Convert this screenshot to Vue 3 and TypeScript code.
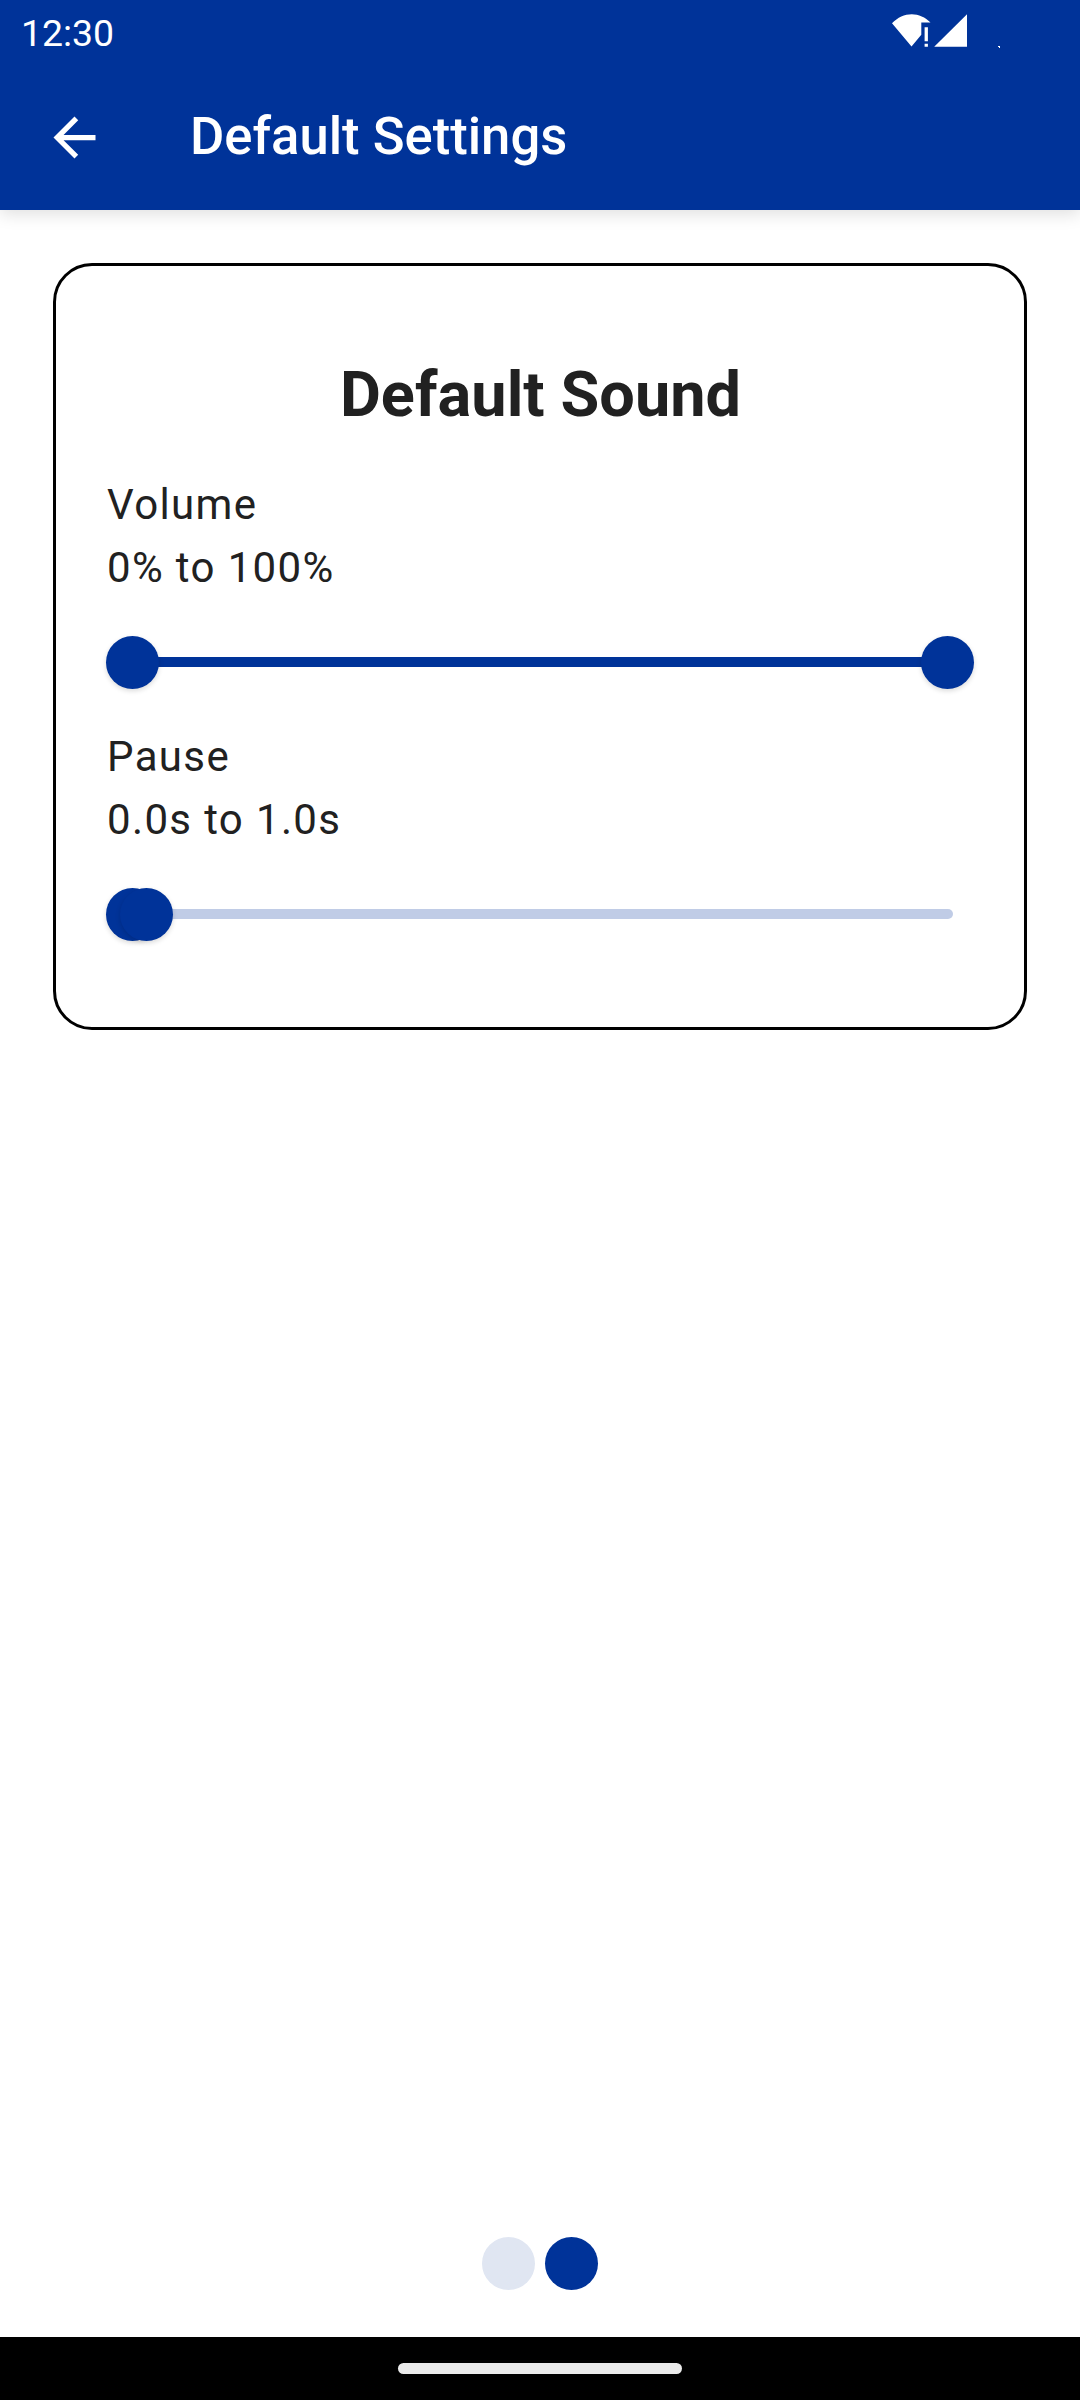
<script setup lang="ts">
interface RangeSetting {
  label: string
  summary: string
  from: number
  to: number
}

const settings: RangeSetting[] = [
  { label: 'Volume', summary: '0% to 100%', from: 0, to: 100 },
  { label: 'Pause', summary: '0.0s to 1.0s', from: 0, to: 1.7 },
]
const pages = [false, true]
</script>

<template>
  <div class="screen">
    <header class="top">
      <div class="status">
        <span class="time">12:30</span>
        <svg class="status-icons" viewBox="0 0 120 40" width="120" height="40">
          <path d="M2 16.3C13 4.2 30 4.2 40.5 15.6V15.4H31.3V27.8L21.5 39.5Z" fill="#fff" />
          <path d="M34.6 20.2h3.3v14h-3.3zM34.6 36.8h3.3v3h-3.3zM44.2 39.8 77 7.2v32.6z" fill="#fff" />
          <path d="M108 39h2v2h-1v-1h-1z" fill="#fff" />
        </svg>
      </div>
      <div class="toolbar">
        <svg class="back" viewBox="0 0 24 24" width="63" height="63">
          <path d="M20 11H7.83l5.59-5.59L12 4l-8 8 8 8 1.41-1.41L7.83 13H20v-2z" fill="#fff" />
        </svg>
        <h1>Default Settings</h1>
      </div>
    </header>

    <main class="body">
      <section class="card">
        <h2>Default Sound</h2>
        <div v-for="s in settings" :key="s.label" class="setting">
          <p>{{ s.label }}</p>
          <p>{{ s.summary }}</p>
          <div class="slider">
            <div class="track"></div>
            <div class="range" :style="{ left: s.from + '%', width: s.to - s.from + '%' }"></div>
            <div class="thumb" :style="{ left: s.from + '%' }"></div>
            <div class="thumb" :style="{ left: s.to + '%' }"></div>
          </div>
        </div>
      </section>
      <div class="dots">
        <span v-for="(active, i) in pages" :key="i" class="dot" :class="{ active }"></span>
      </div>
    </main>

    <footer class="nav"><span class="pill"></span></footer>
  </div>
</template>

<style>
body {
  margin: 0;
}
</style>

<style scoped>
.screen {
  width: 1080px;
  height: 2400px;
  display: flex;
  flex-direction: column;
  background: #fff;
  color: #212121;
  font-family: Roboto, sans-serif;
  overflow: hidden;
}
h1,
h2,
p {
  margin: 0;
}
.top {
  height: 210px;
  flex: none;
  background: #003399;
  color: #fff;
  box-shadow: 0 4px 16px rgba(0, 0, 0, 0.13);
}
.status {
  height: 63px;
  display: flex;
  justify-content: space-between;
  padding: 0 70px 0 21px;
}
.time {
  font-size: 37.4px;
  line-height: 67px;
}
.status-icons {
  display: block;
  overflow: visible;
  margin-top: 7px;
}
.toolbar {
  height: 147px;
  display: flex;
  align-items: center;
}
.back {
  margin: 2px 0 0 43px;
}
h1 {
  margin: 0 0 2px 84px;
  font-size: 52.6px;
  line-height: 62px;
  font-weight: 500;
  white-space: nowrap;
}
.body {
  flex: 1;
  display: flex;
  flex-direction: column;
  justify-content: space-between;
  padding: 53px 53px 47px;
}
.card {
  box-sizing: border-box;
  height: 767px;
  border: 3px solid #000;
  border-radius: 39px;
  padding: 89px 50px 0 51px;
}
h2 {
  font-size: 63px;
  line-height: 80px;
  font-weight: 700;
  letter-spacing: 0.05px;
  text-align: center;
  margin-bottom: 38px;
}
.setting {
  height: 252px;
}
p {
  font-size: 42px;
  line-height: 63px;
  letter-spacing: 1.36px;
}
.slider {
  position: relative;
  height: 126px;
  margin: 0 26.6px 0 25.4px;
}
.track,
.range {
  position: absolute;
  top: 57.7px;
  height: 10.5px;
}
.track {
  left: -5px;
  right: -5.4px;
  border-radius: 6px;
  background: #c0cce6;
}
.range {
  background: #003399;
}
.thumb {
  position: absolute;
  top: 37px;
  width: 53px;
  height: 53px;
  margin-left: -26.4px;
  border-radius: 50%;
  background: #003399;
  box-shadow: 0 2px 5px rgba(0, 0, 0, 0.15);
}
.dots {
  display: flex;
  justify-content: center;
  gap: 10px;
}
.dot {
  width: 53px;
  height: 53px;
  border-radius: 50%;
  background: #e0e6f2;
}
.dot.active {
  background: #003399;
}
.nav {
  flex: none;
  height: 63px;
  display: flex;
  justify-content: center;
  background: #000;
}
.pill {
  width: 284px;
  height: 11px;
  margin-top: 26px;
  border-radius: 6px;
  background: #ebebeb;
}
</style>
